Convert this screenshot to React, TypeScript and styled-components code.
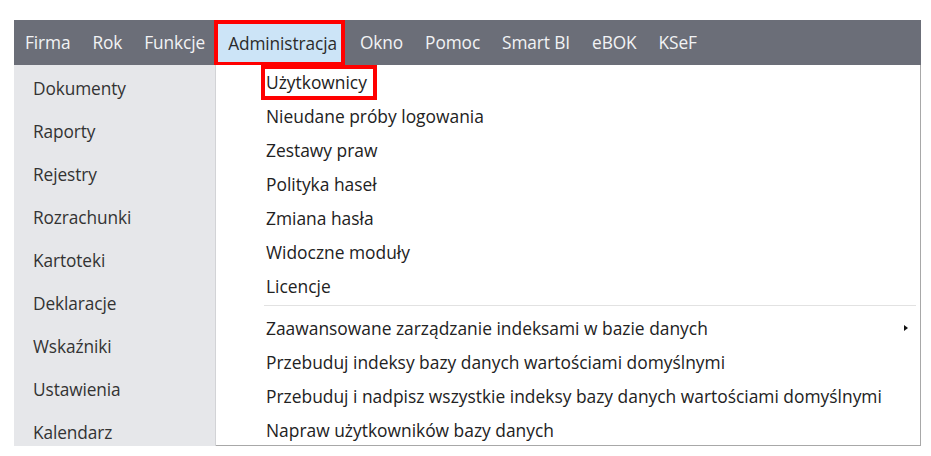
import React from "react";
import styled, { createGlobalStyle } from "styled-components";

const GlobalStyle = createGlobalStyle`
  body {
    margin: 0;
    background: #ffffff;
    font-family: "Open Sans", "Noto Sans", sans-serif;
  }
`;

const Page = styled.div`
  width: 931px;
  height: 456px;
  padding: 20px 10px 0 14px;
  box-sizing: border-box;
  overflow: hidden;
`;

const Window = styled.div`
  display: flex;
  flex-direction: column;
`;

const MenuBar = styled.div`
  display: flex;
  align-items: stretch;
  height: 45px;
  background: #6b6e78;
`;

const MenuItem = styled.div<{ $active?: boolean }>`
  display: flex;
  align-items: center;
  padding: 0 11px;
  font-size: 17.3px;
  letter-spacing: -0.1px;
  color: ${(p) => (p.$active ? "#2b2b2b" : "#f2f3f5")};
  background: ${(p) => (p.$active ? "#cce4f7" : "transparent")};
  ${(p) =>
    p.$active &&
    `
    margin: 0 4px 0 -2px;
    padding: 0 4px 0 10px;
    border: 4px solid #ff0000;
    border-bottom-width: 3px;
  `}
`;

const Body = styled.div`
  display: flex;
  height: 381px;
  overflow: hidden;
`;

const Sidebar = styled.div`
  width: 202px;
  flex-shrink: 0;
  background: #e6e7ea;
  border-right: 1px solid #d2d3d6;
  padding-top: 2px;
  box-sizing: border-box;
`;

const SideItem = styled.div`
  height: 43px;
  display: flex;
  align-items: center;
  padding-left: 19px;
  font-size: 17.3px;
  letter-spacing: -0.1px;
  color: #333333;
`;

const Dropdown = styled.div`
  flex: 1;
  background: #ffffff;
  border-right: 1px solid #a8a8a8;
  border-bottom: 1px solid #a8a8a8;
`;

const DropItem = styled.div`
  height: 34px;
  display: flex;
  align-items: center;
  justify-content: space-between;
  padding: 0 12px 0 50px;
  font-size: 17.4px;
  color: #222222;
`;

const Marked = styled.span`
  margin-left: -5px;
  padding: 1px 6px 2px 1px;
  border: 4px solid #ff0000;
`;

const Separator = styled.div`
  height: 1px;
  margin: 2px 4px 5px 48px;
  background: #e2e2e2;
`;

const SubArrow = styled.span`
  width: 0;
  height: 0;
  border-top: 3px solid transparent;
  border-bottom: 3px solid transparent;
  border-left: 4px solid #111111;
`;

const menu = ["Firma", "Rok", "Funkcje", "Administracja", "Okno", "Pomoc", "Smart BI", "eBOK", "KSeF"];

const modules = [
  "Dokumenty",
  "Raporty",
  "Rejestry",
  "Rozrachunki",
  "Kartoteki",
  "Deklaracje",
  "Wskaźniki",
  "Ustawienia",
  "Kalendarz",
];

const adminTop = [
  "Nieudane próby logowania",
  "Zestawy praw",
  "Polityka haseł",
  "Zmiana hasła",
  "Widoczne moduły",
  "Licencje",
];

const adminBottom = [
  "Przebuduj indeksy bazy danych wartościami domyślnymi",
  "Przebuduj i nadpisz wszystkie indeksy bazy danych wartościami domyślnymi",
  "Napraw użytkowników bazy danych",
];

const App: React.FC = () => {
  return (
    <Page>
      <GlobalStyle />
      <Window>
        <MenuBar>
          {menu.map((m) => (
            <MenuItem key={m} $active={m === "Administracja"}>
              {m}
            </MenuItem>
          ))}
        </MenuBar>
        <Body>
          <Sidebar>
            {modules.map((m) => (
              <SideItem key={m}>{m}</SideItem>
            ))}
          </Sidebar>
          <Dropdown>
            <DropItem>
              <Marked>Użytkownicy</Marked>
            </DropItem>
            {adminTop.map((a) => (
              <DropItem key={a}>{a}</DropItem>
            ))}
            <Separator />
            <DropItem>
              <span>Zaawansowane zarządzanie indeksami w bazie danych</span>
              <SubArrow />
            </DropItem>
            {adminBottom.map((a) => (
              <DropItem key={a}>{a}</DropItem>
            ))}
          </Dropdown>
        </Body>
      </Window>
    </Page>
  );
};

export default App;
